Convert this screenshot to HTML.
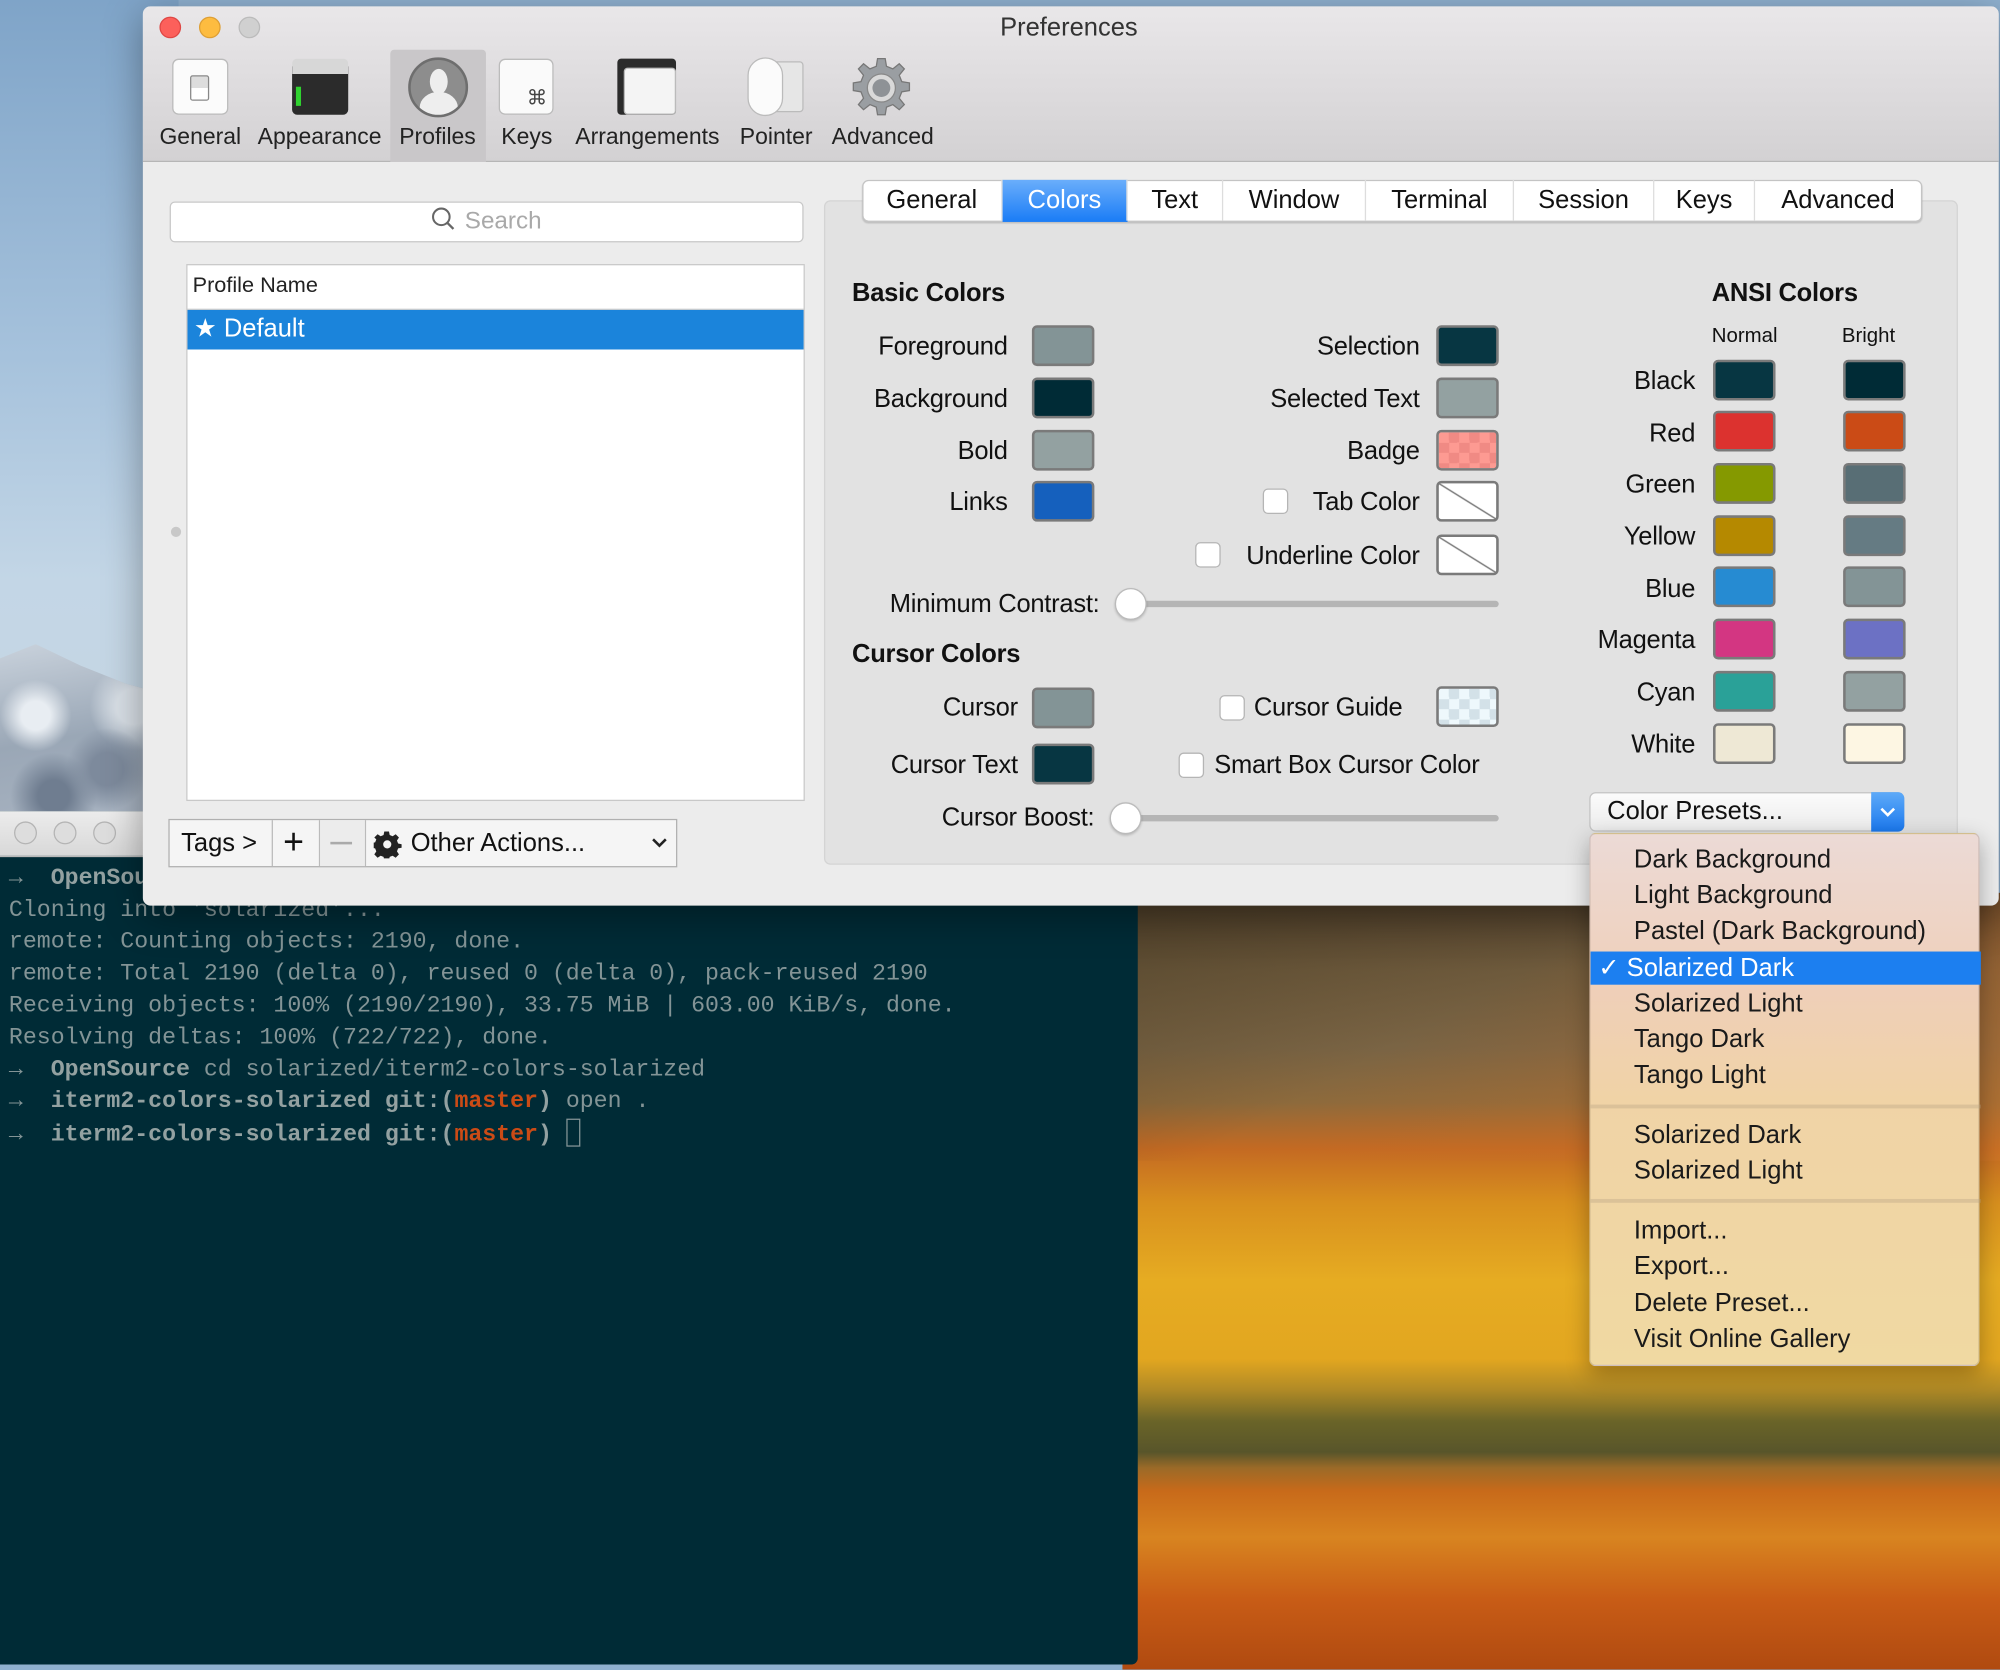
<!DOCTYPE html>
<html><head><meta charset="utf-8">
<style>
*{margin:0;padding:0;box-sizing:border-box}
html,body{width:2000px;height:1670px;overflow:hidden;background:#8fb0cf}
#s{position:absolute;left:0;top:0;width:1568px;height:1309px;transform:scale(1.27551);transform-origin:0 0;font-family:"Liberation Sans",sans-serif;color:#111;overflow:hidden}
.a{position:absolute}
.lbl{position:absolute;font-size:20px;white-space:nowrap;line-height:24px;letter-spacing:-0.2px}
.r{text-align:right}
.sw{position:absolute;width:49px;height:32px;border:2px solid #7a7a7a;border-radius:4px}
.cb{position:absolute;width:20px;height:20px;background:#fff;border:1px solid #b5b5b5;border-radius:4px}
.tab{position:absolute;top:141px;height:32px;font-size:20px;line-height:32px;text-align:center;border-right:1px solid #ddd}
.mi{position:absolute;left:34px;font-size:20px;line-height:28px;white-space:nowrap;color:#1a1a1a}
.t{position:absolute;left:7px;font-family:"Liberation Mono",monospace;font-size:18.2px;color:#839496;white-space:pre;line-height:25px}
.b{font-weight:bold;color:#93a1a1}
.m{font-weight:bold;color:#cb4b16}
.tl{position:absolute;font-size:18px;color:#222;text-align:center;top:97px;white-space:nowrap}
</style></head><body><div id="s">
<!-- wallpaper left -->
<div class="a" style="left:0;top:0;width:140px;height:700px;background:linear-gradient(180deg,#7fa4c8 0%,#a6c2dc 40%,#c3d6e6 65%,#c8d6e0 100%)"></div>
<div class="a" style="left:0;top:505px;width:140px;height:140px;background:radial-gradient(circle at 20% 40%,#e8edf2 0 8%,transparent 20%),radial-gradient(circle at 60% 70%,#7d8a9c 0 10%,transparent 25%),radial-gradient(circle at 30% 85%,#6f7d90 0 8%,transparent 22%),radial-gradient(circle at 75% 35%,#d8dfe6 0 10%,transparent 25%),linear-gradient(170deg,#c9d2dc,#9aa7b6 50%,#a9b4c2);clip-path:polygon(0 8%,20% 0,45% 12%,70% 22%,100% 30%,100% 100%,0 100%)"></div>
<!-- wallpaper right -->
<div class="a" style="left:880px;top:700px;width:688px;height:609px;background:linear-gradient(180deg,#4f3e2a 0%,#6e5a3c 10%,#7a6444 20%,#8d6a3c 27%,#c46a22 33%,#d8901e 40%,#e6ac22 50%,#e2a620 60%,#b08a26 64%,#6a6428 68%,#58552a 72%,#9a6a28 74%,#c86a1a 77%,#d88420 83%,#c85c16 91%,#b04a10 100%)"></div>
<div class="a" style="left:880px;top:700px;width:688px;height:210px;background:linear-gradient(150deg,rgba(60,50,30,.4) 0%,transparent 40%,rgba(200,110,40,.4) 75%,rgba(210,120,40,.5) 100%)"></div>
<!-- terminal -->
<div class="a" style="left:0;top:636px;width:892px;height:669px;background:#002b36;border-radius:0 0 5px 0"></div>
<div class="a" style="left:0;top:636px;width:892px;height:36px;background:linear-gradient(#ececec,#d8d8d8);border-bottom:1px solid #b8b8b8"></div>
<div class="a" style="left:11px;top:644px;width:18px;height:18px;border-radius:50%;border:1px solid #b4b4b4;background:#ddd"></div>
<div class="a" style="left:42px;top:644px;width:18px;height:18px;border-radius:50%;border:1px solid #b4b4b4;background:#ddd"></div>
<div class="a" style="left:73px;top:644px;width:18px;height:18px;border-radius:50%;border:1px solid #b4b4b4;background:#ddd"></div>
<div class="t" style="top:677px"><span>→</span>  <span class="b">OpenSource</span> git clone</div>
<div class="t" style="top:702px">Cloning into 'solarized'...</div>
<div class="t" style="top:727px">remote: Counting objects: 2190, done.</div>
<div class="t" style="top:752px">remote: Total 2190 (delta 0), reused 0 (delta 0), pack-reused 2190</div>
<div class="t" style="top:777px">Receiving objects: 100% (2190/2190), 33.75 MiB | 603.00 KiB/s, done.</div>
<div class="t" style="top:802px">Resolving deltas: 100% (722/722), done.</div>
<div class="t" style="top:827px"><span>→</span>  <span class="b">OpenSource</span> cd solarized/iterm2-colors-solarized</div>
<div class="t" style="top:852px"><span>→</span>  <span class="b">iterm2-colors-solarized git:(</span><span class="m">master</span><span class="b">)</span> open .</div>
<div class="t" style="top:877px"><span>→</span>  <span class="b">iterm2-colors-solarized git:(</span><span class="m">master</span><span class="b">)</span> <span style="display:inline-block;width:11px;height:22px;border:1.5px solid #839496;vertical-align:-5px"></span></div>

<!-- prefs window -->
<div class="a" style="left:112px;top:5px;width:1455px;height:705px;background:#ececec;border-radius:6px;box-shadow:0 8px 30px rgba(0,0,0,.35);overflow:hidden">
 <div class="a" style="left:0;top:0;width:1455px;height:122px;background:linear-gradient(#e9e7e9,#d3d1d3);border-bottom:1px solid #b5b5b5"></div>
</div>
<div class="a" style="left:125px;top:13px;width:17px;height:17px;border-radius:50%;background:#fc605b;border:1px solid #df4744"></div>
<div class="a" style="left:156px;top:13px;width:17px;height:17px;border-radius:50%;background:#fdbc40;border:1px solid #de9f34"></div>
<div class="a" style="left:187px;top:13px;width:17px;height:17px;border-radius:50%;background:#d0d0d0;border:1px solid #bbb"></div>
<div class="a" style="left:0;top:11px;width:1676px;text-align:center;font-size:20px;color:#333">Preferences</div>
<!-- toolbar -->
<div class="a" style="left:306px;top:39px;width:75px;height:88px;background:#c9c7c9;border-radius:3px 3px 0 0"></div>
<div class="a" style="left:135px;top:46px;width:44px;height:44px;background:#fbfbfb;border:1px solid #bbb;border-radius:5px"><div class="a" style="left:13px;top:12px;width:15px;height:20px;border:1px solid #888;border-radius:2px;background:linear-gradient(#ddd 50%,#fff 50%)"></div></div>
<div class="a" style="left:229px;top:46px;width:44px;height:44px;background:#2b2b2b;border-radius:4px;border-top:12px solid #d7d7d7"><div class="a" style="left:3px;top:10px;width:4px;height:15px;background:#2fd22f"></div></div>
<div class="a" style="left:320px;top:45px;width:47px;height:47px;border-radius:50%;background:#8d8d8d;border:2px solid #6e6e6e;overflow:hidden"><div class="a" style="left:15px;top:7px;width:14px;height:20px;border-radius:50%;background:#eee"></div><div class="a" style="left:7px;top:25px;width:30px;height:25px;border-radius:50% 50% 0 0;background:#eee"></div></div>
<div class="a" style="left:391px;top:46px;width:43px;height:44px;background:#fafafa;border:1px solid #bbb;border-radius:5px;font-size:16px;text-align:right;padding:20px 4px 0 0;color:#444">⌘</div>
<div class="a" style="left:484px;top:46px;width:46px;height:44px;background:#2b2b2b;border-radius:3px"><div class="a" style="left:5px;top:7px;width:41px;height:37px;background:#f4f4f4;border:1px solid #bbb;border-radius:3px"></div></div>
<div class="a" style="left:586px;top:45px;width:45px;height:46px;"><div class="a" style="left:14px;top:3px;width:30px;height:40px;background:#e6e6e6;border:1px solid #bbb;border-radius:3px"></div><div class="a" style="left:0;top:0;width:28px;height:46px;background:#fbfbfb;border:1px solid #bbb;border-radius:14px"></div></div>
<svg class="a" style="left:667px;top:45px" width="48" height="48" viewBox="0 0 48 48"><g fill="#9a9ea2" stroke="#777" stroke-width="1"><path d="M21 1h6l1 6 5 2 5-4 4 4-4 5 2 5 6 1v6l-6 1-2 5 4 5-4 4-5-4-5 2-1 6h-6l-1-6-5-2-5 4-4-4 4-5-2-5-6-1v-6l6-1 2-5-4-5 4-4 5 4 5-2z"/></g><circle cx="24" cy="24" r="11" fill="#d9d9d9" stroke="#888"/><circle cx="24" cy="24" r="7" fill="#8e9296"/></svg>
<div class="tl" style="left:125px">General</div>
<div class="tl" style="left:202px">Appearance</div>
<div class="tl" style="left:313px">Profiles</div>
<div class="tl" style="left:393px">Keys</div>
<div class="tl" style="left:451px">Arrangements</div>
<div class="tl" style="left:580px">Pointer</div>
<div class="tl" style="left:652px">Advanced</div>

<!-- left pane -->
<div class="a" style="left:133px;top:158px;width:497px;height:32px;background:#fff;border:1px solid #c8c8c8;border-radius:4px;font-size:19px;color:#a9a9a9;text-align:center;line-height:30px"><svg width="20" height="20" viewBox="0 0 20 20" style="vertical-align:-3px;margin-right:6px"><circle cx="8" cy="8" r="6.5" fill="none" stroke="#666" stroke-width="1.6"/><path d="M12.5 12.5l5 5" stroke="#666" stroke-width="1.8"/></svg>Search</div>
<div class="a" style="left:146px;top:207px;width:485px;height:421px;background:#fff;border:1px solid #c8c8c8"></div>
<div class="a" style="left:151px;top:214px;font-size:17px;color:#222">Profile Name</div>
<div class="a" style="left:147px;top:242px;width:483px;height:1px;background:#ccc"></div>
<div class="a" style="left:147px;top:243px;width:483px;height:31px;background:#1b84db;color:#fff;font-size:20px;line-height:31px;padding-left:5px">★ Default</div>
<div class="a" style="left:134px;top:413px;width:8px;height:8px;border-radius:50%;background:#c8c8c8"></div>
<div class="a" style="left:132px;top:642px;width:399px;height:38px;background:#f5f5f5;border:1px solid #b0b0b0"></div>
<div class="a" style="left:213px;top:643px;width:1px;height:36px;background:#bbb"></div>
<div class="a" style="left:250px;top:643px;width:1px;height:36px;background:#bbb"></div>
<div class="a" style="left:286px;top:643px;width:1px;height:36px;background:#bbb"></div>
<div class="a" style="left:251px;top:643px;width:35px;height:36px;background:#ececec"></div>
<div class="a" style="left:142px;top:650px;font-size:20px">Tags &gt;</div>
<div class="a" style="left:222px;top:644px;font-size:28px;font-weight:300">+</div>
<div class="a" style="left:259px;top:660px;width:17px;height:1.5px;background:#aaa"></div>
<svg class="a" style="left:293px;top:651px" width="22" height="22" viewBox="0 0 22 22"><path d="M9 1h4l.6 3 2.5 1 2.6-1.7 2.8 2.8L19.8 8.7l1 2.5 3 .6v-1 4l-3 .6-1 2.5 1.7 2.6-2.8 2.8-2.6-1.7-2.5 1-.6 3H9l-.6-3-2.5-1-2.6 1.7-2.8-2.8 1.7-2.6-1-2.5-3-.6v-4l3-.6 1-2.5L.5 6.1l2.8-2.8 2.6 1.7 2.5-1z" fill="#222" transform="scale(.92)"/><circle cx="10.6" cy="11" r="3.2" fill="#f5f5f5"/></svg>
<div class="a" style="left:322px;top:650px;font-size:20px">Other Actions...</div>
<svg class="a" style="left:510px;top:656px" width="14" height="10"><path d="M2 2l5 5 5-5" fill="none" stroke="#222" stroke-width="2"/></svg>

<!-- right panel -->
<div class="a" style="left:646px;top:157px;width:889px;height:521px;background:#e2e2e2;border:1px solid #d4d4d4;border-radius:5px"></div>
<div class="a" style="left:676px;top:141px;width:831px;height:33px;background:#fff;border:1px solid #c4c4c4;border-radius:5px;box-shadow:0 1px 1px rgba(0,0,0,.15)"></div>
<div class="a" style="left:786px;top:141px;width:98px;height:33px;background:linear-gradient(#6aaefb,#1a7cf6);"></div>
<div class="tab" style="left:676px;width:110px">General</div>
<div class="tab" style="left:786px;width:98px;color:#fff">Colors</div>
<div class="tab" style="left:884px;width:75px">Text</div>
<div class="tab" style="left:959px;width:112px">Window</div>
<div class="tab" style="left:1071px;width:116px">Terminal</div>
<div class="tab" style="left:1187px;width:110px">Session</div>
<div class="tab" style="left:1297px;width:79px">Keys</div>
<div class="tab" style="left:1376px;width:130px;border:none">Advanced</div>

<div class="lbl" style="left:668px;top:218px;font-weight:bold">Basic Colors</div>
<div class="lbl r" style="left:590px;width:200px;top:260px">Foreground</div>
<div class="lbl r" style="left:590px;width:200px;top:301px">Background</div>
<div class="lbl r" style="left:590px;width:200px;top:342px">Bold</div>
<div class="lbl r" style="left:590px;width:200px;top:382px">Links</div>
<div class="sw" style="left:809px;top:255px;background:#839496"></div>
<div class="sw" style="left:809px;top:296px;background:#002b36"></div>
<div class="sw" style="left:809px;top:337px;background:#93a1a1"></div>
<div class="sw" style="left:809px;top:377px;background:#1560bd"></div>
<div class="lbl r" style="left:913px;width:200px;top:260px">Selection</div>
<div class="lbl r" style="left:913px;width:200px;top:301px">Selected Text</div>
<div class="lbl r" style="left:913px;width:200px;top:342px">Badge</div>
<div class="lbl r" style="left:913px;width:200px;top:382px">Tab Color</div>
<div class="lbl r" style="left:913px;width:200px;top:424px">Underline Color</div>
<div class="cb" style="left:990px;top:383px"></div>
<div class="cb" style="left:937px;top:425px"></div>
<div class="sw" style="left:1126px;top:255px;background:#073642"></div>
<div class="sw" style="left:1126px;top:296px;background:#93a1a1"></div>
<div class="sw" style="left:1126px;top:337px;background:repeating-conic-gradient(#f08a84 0 25%,#fd9a92 0 50%) 0 0/16px 16px"></div>
<div class="sw" style="left:1126px;top:377px;background:linear-gradient(to top right,#fff calc(50% - 1px),#666 50%,#fff calc(50% + 1px))"></div>
<div class="sw" style="left:1126px;top:419px;background:linear-gradient(to top right,#fff calc(50% - 1px),#666 50%,#fff calc(50% + 1px))"></div>
<div class="lbl r" style="left:600px;width:262px;top:462px">Minimum Contrast:</div>
<div class="a" style="left:886px;top:471px;width:289px;height:5px;background:#b5b5b5;border-radius:3px"></div>
<div class="a" style="left:874px;top:461px;width:25px;height:25px;border-radius:50%;background:#fff;border:1px solid #bbb;box-shadow:0 1px 2px rgba(0,0,0,.2)"></div>
<div class="lbl" style="left:668px;top:501px;font-weight:bold">Cursor Colors</div>
<div class="lbl r" style="left:598px;width:200px;top:543px">Cursor</div>
<div class="lbl r" style="left:598px;width:200px;top:588px">Cursor Text</div>
<div class="sw" style="left:809px;top:539px;background:#839496"></div>
<div class="sw" style="left:809px;top:583px;background:#073642"></div>
<div class="cb" style="left:956px;top:545px"></div>
<div class="lbl" style="left:983px;top:543px">Cursor Guide</div>
<div class="sw" style="left:1126px;top:538px;background:repeating-conic-gradient(#d3e1e8 0 25%,#eef8fc 0 50%) 0 0/16px 16px"></div>
<div class="cb" style="left:924px;top:590px"></div>
<div class="lbl" style="left:952px;top:588px">Smart Box Cursor Color</div>
<div class="lbl r" style="left:600px;width:258px;top:629px">Cursor Boost:</div>
<div class="a" style="left:882px;top:639px;width:293px;height:5px;background:#b5b5b5;border-radius:3px"></div>
<div class="a" style="left:870px;top:629px;width:25px;height:25px;border-radius:50%;background:#fff;border:1px solid #bbb;box-shadow:0 1px 2px rgba(0,0,0,.2)"></div>

<div class="lbl" style="left:1342px;top:218px;font-weight:bold">ANSI Colors</div>
<div class="a" style="left:1342px;top:255px;font-size:16px">Normal</div>
<div class="a" style="left:1444px;top:255px;font-size:16px">Bright</div>
<div class="lbl r" style="left:1179px;width:150px;top:287px">Black</div>
<div class="lbl r" style="left:1179px;width:150px;top:328px">Red</div>
<div class="lbl r" style="left:1179px;width:150px;top:368px">Green</div>
<div class="lbl r" style="left:1179px;width:150px;top:409px">Yellow</div>
<div class="lbl r" style="left:1179px;width:150px;top:450px">Blue</div>
<div class="lbl r" style="left:1179px;width:150px;top:490px">Magenta</div>
<div class="lbl r" style="left:1179px;width:150px;top:531px">Cyan</div>
<div class="lbl r" style="left:1179px;width:150px;top:572px">White</div>
<div class="sw" style="left:1343px;top:282px;background:#073642"></div>
<div class="sw" style="left:1343px;top:322px;background:#dc322f"></div>
<div class="sw" style="left:1343px;top:363px;background:#859900"></div>
<div class="sw" style="left:1343px;top:404px;background:#b58900"></div>
<div class="sw" style="left:1343px;top:444px;background:#268bd2"></div>
<div class="sw" style="left:1343px;top:485px;background:#d33682"></div>
<div class="sw" style="left:1343px;top:526px;background:#2aa198"></div>
<div class="sw" style="left:1343px;top:567px;background:#eee8d5"></div>
<div class="sw" style="left:1445px;top:282px;background:#002b36"></div>
<div class="sw" style="left:1445px;top:322px;background:#cb4b16"></div>
<div class="sw" style="left:1445px;top:363px;background:#586e75"></div>
<div class="sw" style="left:1445px;top:404px;background:#657b83"></div>
<div class="sw" style="left:1445px;top:444px;background:#839496"></div>
<div class="sw" style="left:1445px;top:485px;background:#6c71c4"></div>
<div class="sw" style="left:1445px;top:526px;background:#93a1a1"></div>
<div class="sw" style="left:1445px;top:567px;background:#fdf6e3"></div>

<!-- presets popup -->
<div class="a" style="left:1246px;top:621px;width:247px;height:31px;background:linear-gradient(#fbfbfb,#ececec);border:1px solid #c4c4c4;border-radius:5px;font-size:20px;line-height:29px;padding-left:13px">Color Presets...</div>
<div class="a" style="left:1467px;top:621px;width:26px;height:31px;background:linear-gradient(#5eaaf8,#1a78ee);border-radius:0 5px 5px 0"><svg width="26" height="31"><path d="M8 13l5 5 5-5" fill="none" stroke="#fff" stroke-width="2"/></svg></div>
<div class="a" style="left:1246px;top:653px;width:306px;height:418px;background:linear-gradient(180deg,#ecdad6 0%,#efcfb8 30%,#f0d3a6 50%,#f0d9a2 100%);border:1px solid rgba(0,0,0,.12);border-radius:5px;box-shadow:0 6px 18px rgba(0,0,0,.3)">
 <div class="mi" style="top:6px">Dark Background</div>
 <div class="mi" style="top:34px">Light Background</div>
 <div class="mi" style="top:62px">Pastel (Dark Background)</div>
 <div class="a" style="left:0;top:92px;width:306px;height:26px;background:#1c7ff0"></div>
 <div class="mi" style="top:91px;color:#fff;left:6px">✓ Solarized Dark</div>
 <div class="mi" style="top:119px">Solarized Light</div>
 <div class="mi" style="top:147px">Tango Dark</div>
 <div class="mi" style="top:175px">Tango Light</div>
 <div class="a" style="left:0;top:212px;width:306px;height:3px;background:rgba(180,160,130,.35)"></div>
 <div class="mi" style="top:222px">Solarized Dark</div>
 <div class="mi" style="top:250px">Solarized Light</div>
 <div class="a" style="left:0;top:286px;width:306px;height:3px;background:rgba(180,160,130,.35)"></div>
 <div class="mi" style="top:297px">Import...</div>
 <div class="mi" style="top:325px">Export...</div>
 <div class="mi" style="top:354px">Delete Preset...</div>
 <div class="mi" style="top:382px">Visit Online Gallery</div>
</div>
</div></body></html>
